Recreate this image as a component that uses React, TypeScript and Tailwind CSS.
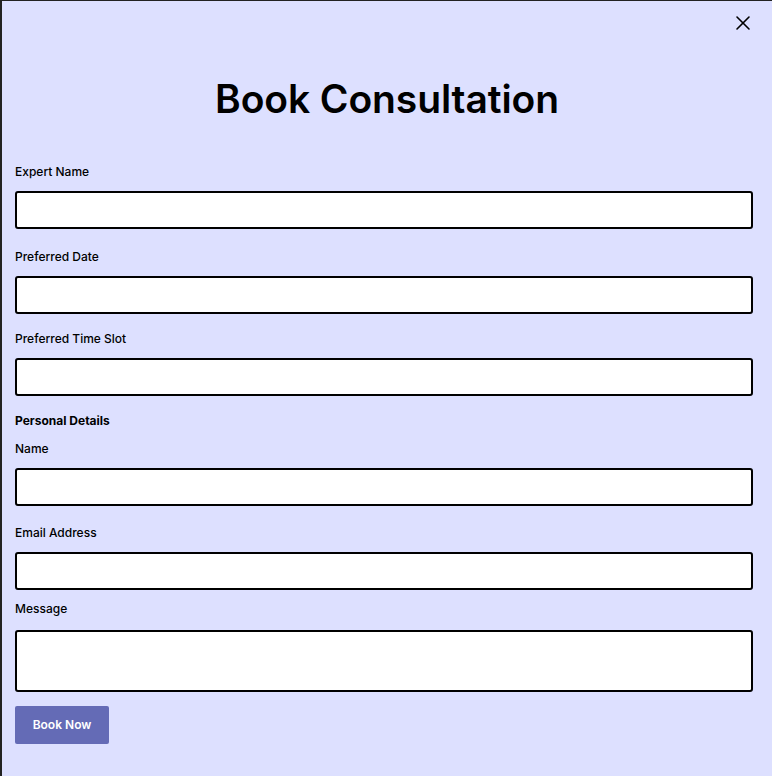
import { X } from "lucide-react"

function Field({
  label,
  className,
  tall,
  gap = "mt-[11px]",
}: {
  label: string
  className?: string
  tall?: boolean
  gap?: string
}) {
  return (
    <div className={className}>
      <label className="block text-[12px] leading-4 font-medium text-black">{label}</label>
      <div
        className={`${gap} w-full bg-white border-2 border-black rounded-[3px] ${tall ? "h-[62px]" : "h-[38px]"}`}
      />
    </div>
  )
}

export default function App() {
  return (
    <div
      className="relative w-[772px] h-[776px] bg-[#dde0ff] border-l-2 border-t border-[#222] overflow-hidden"
      style={{ fontFamily: "Inter, 'Open Sans', sans-serif" }}
    >
      <button className="absolute right-[17px] top-[10px] text-black">
        <X className="w-[24px] h-[24px]" strokeWidth={1.6} />
      </button>

      <h1 className="mt-[75px] text-center text-[39px] leading-[46px] font-semibold text-black tracking-[-0.1px]">
        Book Consultation
      </h1>

      <div className="mt-[42px] pl-[13px] pr-[19px] flex flex-col">
        <Field label="Expert Name" />
        <Field label="Preferred Date" className="mt-[20px]" />
        <Field label="Preferred Time Slot" className="mt-[17px]" />
        <div className="mt-[17px] text-[12px] leading-4 font-bold text-black">Personal Details</div>
        <Field label="Name" className="mt-[12px]" />
        <Field label="Email Address" className="mt-[19px]" />
        <Field label="Message" className="mt-[11px]" gap="mt-[13px]" tall />
        <button className="mt-[14px] w-[94px] h-[38px] bg-[#646bb6] rounded-[2px] text-white text-[12px] font-semibold">
          Book Now
        </button>
      </div>
    </div>
  )
}
